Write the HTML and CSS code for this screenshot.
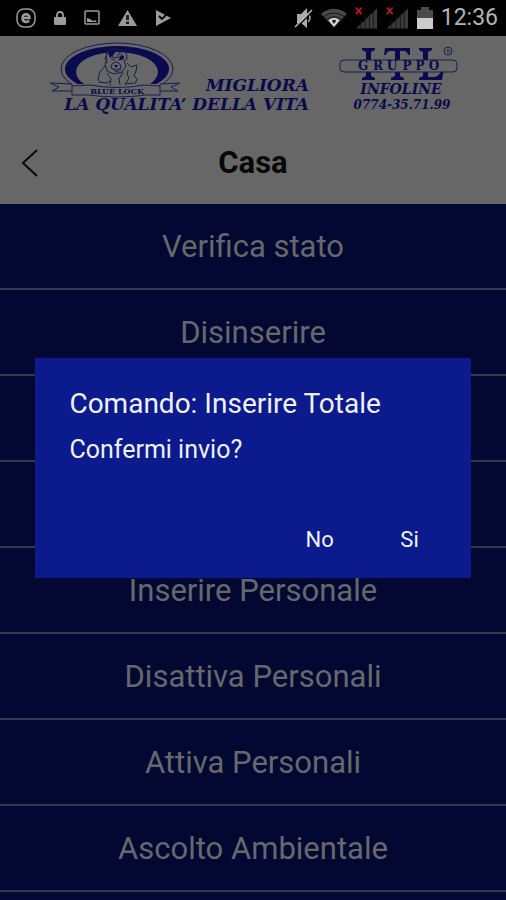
FILE: index.html
```html
<!DOCTYPE html>
<html lang="it">
<head>
<meta charset="utf-8">
<meta name="viewport" content="width=device-width, initial-scale=1">
<title>Casa</title>
<link rel="stylesheet" href="styles.css">
</head>
<body>
<div class="status">
  <div class="status-group status-left">
    <svg width="20" height="20" viewBox="0 0 20 20" fill="none" stroke="#9b9b9b"><rect x="1" y="1" width="18" height="18" rx="7" stroke-width="1.5"/><path d="M6.5 10h7c0-5-7-5-7 0s5 4.500 6.500 2.500" stroke-width="2.600"/></svg>
    <svg width="12" height="16" viewBox="0 0 12 16"><rect x="0" y="7" width="12" height="8" rx="1" fill="#9b9b9b"/><path d="M3 8V5a3 3 0 0 1 6 0v3" fill="none" stroke="#9b9b9b" stroke-width="1.800"/></svg>
    <svg width="16" height="16" viewBox="0 0 16 16"><rect x="1" y="1" width="14" height="13" rx="1" fill="none" stroke="#9b9b9b" stroke-width="1.500"/><path d="M3 12V8l3 1 3 2 2-1 2 2z" fill="#9b9b9b"/></svg>
    <svg width="19" height="18" viewBox="0 0 19 18"><path d="M9.500 1 19 17H0z" fill="#9b9b9b"/><path d="M8 6h3v5H8zM8 12.500h3V15H8z" fill="#222"/></svg>
    <svg width="17" height="18" viewBox="0 0 17 18"><path d="M1 1l15 8L1 17z" fill="#9b9b9b"/><path d="M4 7l3 3 6-6" fill="none" stroke="#000" stroke-width="1.800"/></svg>
  </div>
  <div class="status-group status-right">
    <svg width="19" height="22" viewBox="0 0 19 22"><path d="M3 7h4l6-6v20l-6-5H3z" fill="#aaa"/><path d="M14 6q4 5 0 9" stroke="#aaa" stroke-width="1.500" fill="none"/><path d="M2 21 18 5" stroke="#000" stroke-width="1.500"/><path d="M1 20 18 3" stroke="#bbb" stroke-width="1.500"/></svg>
    <svg width="26" height="20" viewBox="0 0 28 21"><path d="M0 6Q14-5 28 6L14 21z" fill="#484848"/><path d="M3 9q11-8 22 0M6 12q8-6 16 0" fill="none" stroke="#111"/><path d="M8 13q6-5 12 0l-6 7z" fill="#ddd"/><path d="M11.500 13.500q2.500-2 5 0L14 17z" fill="#222"/></svg>
    <svg width="23" height="24" viewBox="0 0 24 24"><path d="M1 23 23 2v21z" fill="#3b3b3b"/><path d="M6 14v9M10.500 10v13M15 7v16M19 3v20" stroke="#161616"/><path d="m1 1 6 7M7 1 1 8" stroke="#c51420" stroke-width="1.800"/></svg>
    <svg width="23" height="24" viewBox="0 0 24 24"><path d="M1 23 23 2v21z" fill="#3b3b3b"/><path d="M6 14v9M10.500 10v13M15 7v16M19 3v20" stroke="#161616"/><path d="m1 1 6 7M7 1 1 8" stroke="#c51420" stroke-width="1.800"/></svg>
    <svg width="16" height="22" viewBox="0 0 16 22"><path d="M4 0h8v3h4v8H0V3h4z" fill="#4b4b4b"/><path d="M0 11h16v11H0z" fill="#ccc"/></svg>
    <time>12:36</time>
  </div>
</div>

<header class="header">
  <div class="brands">
    <svg width="264" height="74" viewBox="0 0 264 74">
      <defs><clipPath id="oval"><path d="M0 0h140v40l-22 4H22L0 40z"/></clipPath></defs>
      <g clip-path="url(#oval)">
        <ellipse cx="69" cy="29" rx="56" ry="26" class="line"/>
        <path d="M17 29a52 23 0 0 1 104 0a52 23 0 0 1-104 0zM28 32a41 20 0 0 0 82 0a41 20 0 0 0-82 0z" class="ink" fill-rule="evenodd"/>
      </g>
      <g class="line">
        <path d="M58 13q3-5 9-4l9 2q4 3 3 8l-3 2 2 5-4 6-8 2-7-3-2-7 2-4zM60 13l-3 5 2 5M66 11l-2 6 5 1 2-5 5 4M63 19l4 1M70 20l5-1M64 24q4-4 8 0l1 4-5 2-5-2zM65 29l4 3 4-3M57 26l-5 6-2 6 2 5M79 23l4 4 6-2-1 6-2 5 3 3-2 5M59 33l4 6-1 6M75 32l-4 7 1 6M80 30q-2 5 1 8l-4 7M52 42l6 1 5-2M77 44l9-1"/>
        <path d="M24 46l18-1q27 5 54 0l16 1v9H98q-29 4-58 0H24zM24 51H4l7-4-9-4 22 1v2M112 51h18l-7-4 9-4-20 1v2"/>
      </g>
      <path d="M60 13l5-3 2 3-5 5zM71 17l4-2 1 4-4 1zM66 25h4l-2 3z" class="ink"/>
      <text x="69" y="54" class="serif ribbon" text-anchor="middle">BLUE LOCK</text>
      <text x="261" y="51" class="serif slogan" text-anchor="end">MIGLIORA</text>
      <text x="261" y="70" class="serif slogan" text-anchor="end">LA QUALITA’ DELLA VITA</text>
    </svg>
    <svg width="124" height="74" viewBox="0 0 124 74">
      <path class="ink" d="M26 8h13v2l-4 2v24l4 2v2H26v-2l4-2V12l-4-2zM49 8h25v7h-2q-1-4-4-4h-4v25l4 2v2H55v-2l4-2V11h-5q-3 0-4 4h-2zM83 8h13v2l-4 2v25h6q5 0 8-8h2l-2 11H83v-2l4-2V12l-4-2z"/>
      <rect x="4" y="20" width="117" height="12" rx="4" class="pill"/>
      <g class="serif gruppo" text-anchor="middle"><text x="27" y="30">G</text><text x="42" y="30">R</text><text x="56" y="30">U</text><text x="71" y="30">P</text><text x="84" y="30">P</text><text x="98" y="30">O</text></g>
      <circle cx="112" cy="11" r="4" class="line"/><text x="112" y="13" class="mark" text-anchor="middle">R</text>
      <text x="65" y="54" class="serif info" text-anchor="middle">INFOLINE</text>
      <text x="66" y="69" class="serif phone" text-anchor="middle">0774-35.71.99</text>
    </svg>
  </div>
  <div class="title-bar">
    <button class="back" type="button" aria-label="Indietro"><svg width="18" height="28" viewBox="0 0 18 28"><path d="M16 1 2 14l14 13" fill="none" stroke="#080808" stroke-width="2"/></svg></button>
    <h1>Casa</h1>
  </div>
</header>

<main class="commands">
  <button type="button">Verifica stato</button>
  <button type="button">Disinserire</button>
  <button type="button" aria-label="Comando"></button>
  <button type="button" aria-label="Comando"></button>
  <button type="button">Inserire Personale</button>
  <button type="button">Disattiva Personali</button>
  <button type="button">Attiva Personali</button>
  <button type="button">Ascolto Ambientale</button>
</main>

<div class="overlay">
  <section class="dialog" role="dialog" aria-modal="true" aria-labelledby="dialog-title">
    <h2 id="dialog-title">Comando: Inserire Totale</h2>
    <p>Confermi invio?</p>
    <div class="actions">
      <button type="button">No</button>
      <button type="button">Si</button>
    </div>
  </section>
</div>
</body>
</html>
```
FILE: styles.css
```css
* { box-sizing: border-box; }
html, body { height: 100%; }
body {
  margin: 0;
  display: flex;
  flex-direction: column;
  background: #020832;
  font-family: Roboto, "Liberation Sans", sans-serif;
}
svg { display: block; flex: none; }
button { border: 0; padding: 0; background: none; font-family: inherit; }

.status {
  flex: none;
  height: 36px;
  padding: 0 8px 0 16px;
  display: flex;
  align-items: center;
  justify-content: space-between;
  background: #000;
  color: #b4b4b4;
}
.status-group { display: flex; align-items: center; }
.status-left { gap: 18px; }
.status-right { gap: 8px; }
.status time { font-size: 23px; line-height: 36px; }

.header { flex: none; background: #676767; }
.brands {
  display: flex;
  justify-content: space-between;
  padding: 4px 46px 8px 48px;
}
.ink { fill: #0a0a4e; }
.line { fill: none; stroke: #1c1c50; stroke-width: 1; }
.pill { fill: #676767; stroke: #1c1c50; }
.serif { fill: #0a0a4e; font-family: "DejaVu Serif", serif; font-weight: bold; }
.slogan { font-size: 17px; font-style: italic; }
.ribbon { font-size: 8px; }
.gruppo { font-size: 12px; }
.info { font-size: 14px; font-style: italic; }
.phone { font-size: 12px; font-style: italic; }
.mark { fill: #1c1c50; font-size: 6px; }

.title-bar {
  height: 82px;
  display: grid;
  grid-template-columns: 60px 1fr 60px;
  align-items: center;
}
.back { width: 60px; height: 82px; padding-left: 21px; }
.title-bar h1 {
  margin: 0;
  color: #080808;
  font-size: 31px;
  line-height: 40px;
  text-align: center;
}

.commands { flex: 1; min-height: 0; overflow: hidden; }
.commands button {
  display: block;
  width: 100%;
  height: 86px;
  padding-top: 2px;
  border-bottom: 2px solid #34344a;
  background: #020832;
  color: #66686c;
  font-size: 31px;
  line-height: 40px;
}

.overlay {
  position: fixed;
  inset: 36px 0 0;
  display: flex;
  align-items: center;
  justify-content: center;
}
.dialog {
  width: 86%;
  padding: 28px 16px 20px 34px;
  background: #0b1a8c;
  color: #f0f0fa;
}
.dialog h2 { margin: 0; font-size: 28px; font-weight: 400; line-height: 36px; }
.dialog p { margin: 12px 0 56px; font-size: 25px; line-height: 32px; }
.actions { display: flex; justify-content: flex-end; }
.actions button {
  width: 90px;
  height: 36px;
  color: inherit;
  font-size: 22px;
  line-height: 36px;
}
```
